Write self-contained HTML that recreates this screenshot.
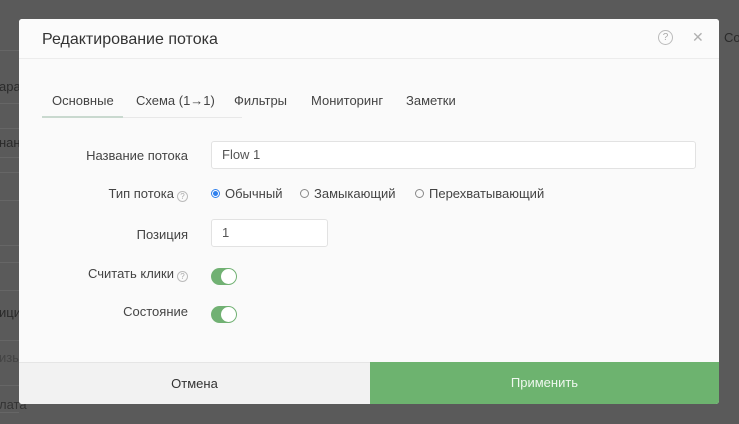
<!DOCTYPE html>
<html><head><meta charset="utf-8"><style>
*{box-sizing:border-box;margin:0;padding:0}
body{width:739px;height:424px;overflow:hidden;background:#5a5a5a;font-family:"Liberation Sans",Arial,sans-serif;position:relative;color:#333}
.bgl{position:absolute;left:0;width:19px;height:1px;background:#666}
.bgt{position:absolute;left:0;font-size:13px;color:#2a2a2a}
.modal{position:absolute;left:19px;top:19px;width:700px;height:385px;background:#fafafa;border-radius:3px;overflow:hidden}
.hdr{position:absolute;left:0;top:0;width:700px;height:40px;border-bottom:1px solid #ececec;background:#fbfbfb}
.title{position:absolute;left:23px;top:12px;font-size:16px;color:#333}
.q{position:absolute;left:639px;top:11px;width:15px;height:15px;border:1px solid #bbb;border-radius:50%;font-size:10px;color:#aaa;text-align:center;line-height:13px}
.x{position:absolute;left:673px;top:10px;font-size:14px;color:#b0b0b0}
.tabs{position:absolute;left:23px;top:72px;width:200px;height:27px;border-bottom:1px solid #e8e8e8}
.tab{position:absolute;top:2px;font-size:13px;color:#444;white-space:nowrap}
.act{position:absolute;left:0;top:25px;width:81px;height:2px;background:#c9d9cf}
.lbl{position:absolute;font-size:13px;color:#444;text-align:right;right:531px}
.inp{position:absolute;background:#fff;border:1px solid #e2e2e2;border-radius:3px;font-size:13px;color:#555;padding-left:10px;line-height:26px}
.sq{display:inline-block;width:11px;height:11px;border:1px solid #bbb;border-radius:50%;font-size:8px;color:#aaa;text-align:center;line-height:10px;vertical-align:-1px;margin-left:3px}
.rad{position:absolute;top:167px;font-size:13px;color:#444}
.rb{display:inline-block;width:9px;height:9px;border:1px solid #888;border-radius:50%;margin-right:5px;vertical-align:0px}
.rb.on{border-color:#2f80ed;background:radial-gradient(#2f80ed 45%,#fff 55%)}
.tg{position:absolute;left:192px;width:26px;height:17px;border-radius:9px;background:#71b173}
.tg:after{content:"";position:absolute;right:1px;top:1px;width:15px;height:15px;border-radius:50%;background:#fff}
.ftl{position:absolute;left:0;top:343px;width:351px;height:42px;background:#f2f2f2;border-top:1px solid #e5e5e5;text-align:center;line-height:41px;font-size:13px;color:#333}
.ftr{position:absolute;left:351px;top:343px;width:349px;height:42px;background:#6db36f;text-align:center;line-height:42px;font-size:13px;color:#eef7ee}
</style></head><body>
<div class="bgl" style="top:50px"></div><div class="bgl" style="top:103px"></div><div class="bgl" style="top:128px"></div><div class="bgl" style="top:157px"></div><div class="bgl" style="top:172px"></div><div class="bgl" style="top:200px"></div><div class="bgl" style="top:245px"></div><div class="bgl" style="top:262px"></div><div class="bgl" style="top:290px"></div><div class="bgl" style="top:340px"></div><div class="bgl" style="top:385px"></div><div class="bgl" style="top:412px"></div>
<div class="bgt" style="top:79px;left:-1px">ара</div>
<div class="bgt" style="top:135px;left:-1px">нан</div>
<div class="bgt" style="top:305px;left:-1px">ици</div>
<div class="bgt" style="top:350px;left:-1px;color:#444">изы</div>
<div class="bgt" style="top:397px;left:-1px;color:#333">лата</div>
<div class="bgt" style="top:30px;left:724px">Co</div>
<div class="modal">
<div class="hdr"><div class="title">Редактирование потока</div><div class="q">?</div><div class="x">✕</div></div>
<div class="tabs">
<div class="tab" style="left:10px">Основные</div>
<div class="tab" style="left:94px">Схема (1→1)</div>
<div class="tab" style="left:192px">Фильтры</div>
<div class="tab" style="left:269px">Мониторинг</div>
<div class="tab" style="left:364px">Заметки</div>
<div class="act"></div>
</div>
<div class="lbl" style="top:129px">Название потока</div>
<div class="inp" style="left:192px;top:122px;width:485px;height:28px">Flow 1</div>
<div class="lbl" style="top:167px">Тип потока<span class="sq">?</span></div>
<div class="rad" style="left:192px"><span class="rb on"></span>Обычный</div>
<div class="rad" style="left:281px"><span class="rb"></span>Замыкающий</div>
<div class="rad" style="left:396px"><span class="rb"></span>Перехватывающий</div>
<div class="lbl" style="top:208px">Позиция</div>
<div class="inp" style="left:192px;top:200px;width:117px;height:28px">1</div>
<div class="lbl" style="top:247px">Считать клики<span class="sq">?</span></div>
<div class="tg" style="top:249px"></div>
<div class="lbl" style="top:285px">Состояние</div>
<div class="tg" style="top:287px"></div>
<div class="ftl">Отмена</div>
<div class="ftr">Применить</div>
</div>
</body></html>
